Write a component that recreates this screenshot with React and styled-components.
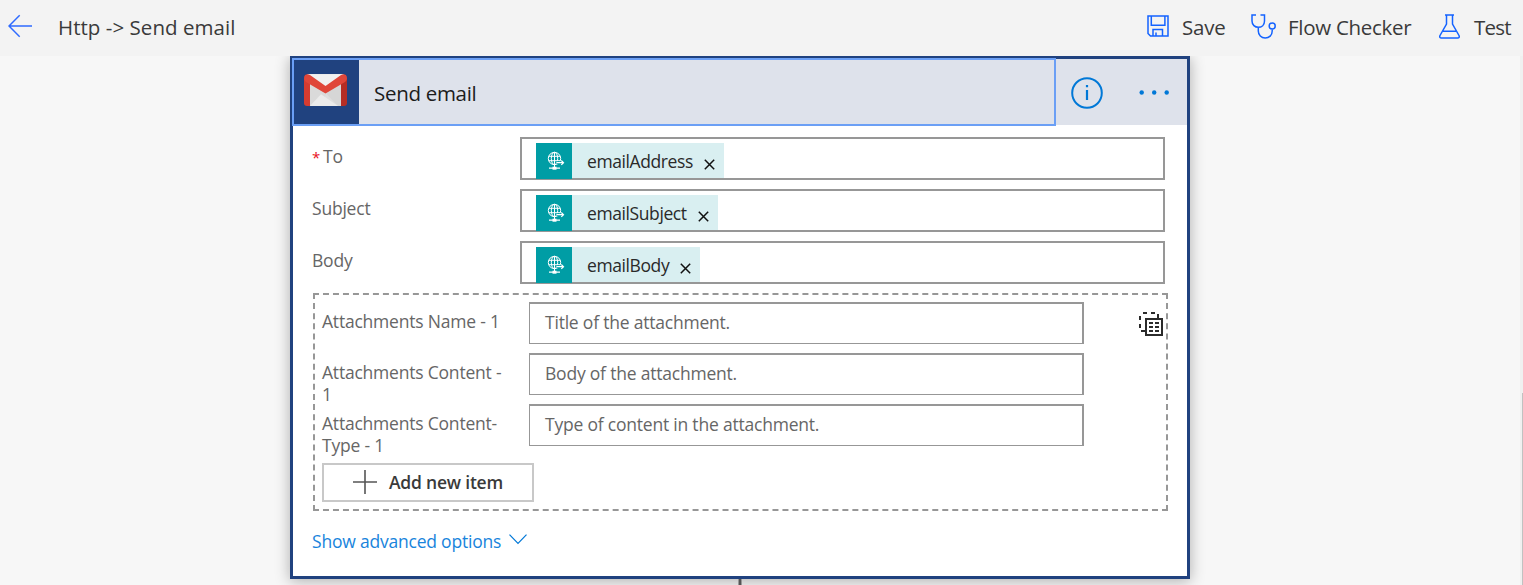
import React from "react";
import styled, { createGlobalStyle } from "styled-components";

const GlobalStyle = createGlobalStyle`
  * { box-sizing: border-box; }
  body { margin: 0; background: #f7f7f7; overflow: hidden; font-family: "Open Sans", "Noto Sans", sans-serif; }
  svg { display: block; flex: none; }
`;

const Page = styled.div`
  display: flex;
  flex-direction: column;
  height: 585px;
  overflow: hidden;
`;

const TopBar = styled.header`
  display: flex;
  align-items: center;
  height: 56px;
  flex: none;
  padding: 0 13px 2px 8px;
  background: #f3f3f3;

  svg { margin-bottom: 2px; }
`;

const Label = styled.span`
  font-size: ${(p) => p.$size || 17.5}px;
  font-weight: ${(p) => p.$weight || 400};
  letter-spacing: ${(p) => p.$track ?? -0.21}px;
  line-height: 22px;
  color: ${(p) => p.$color || "#666"};
  white-space: ${(p) => (p.$wrap ? "normal" : "nowrap")};
`;

const Required = styled.span`
  display: inline-block;
  width: 11px;
  font-size: 15px;
  line-height: 20px;
  color: #e81123;
`;

const FlowTitle = styled.div`
  display: flex;
  margin-left: 25px;
  flex: 1;
`;

const Command = styled.button`
  display: flex;
  align-items: center;
  gap: ${(p) => p.$gap}px;
  width: ${(p) => p.$width}px;
  height: 54px;
  padding: 0;
  border: 0;
  background: none;
  font-family: inherit;
`;

const Canvas = styled.main`
  position: relative;
  display: flex;
  flex: 1;
  flex-direction: column;
  padding-left: 290px;
  overflow: hidden;
`;

const Card = styled.section`
  width: 900px;
  height: 523px;
  flex: none;
  border: 3px solid #20427f;
  background: #fff;
  box-shadow: 0 2px 14px rgba(0, 0, 0, 0.3);
`;

const Connector = styled.div`
  width: 4px;
  height: 6px;
  margin-left: 448px;
  background: #555;
  border: solid #999;
  border-width: 0 1px;
  z-index: 1;
`;

const ScrollTrack = styled.div`
  position: absolute;
  top: 0;
  right: 0;
  width: 3px;
  height: 100%;
  padding: 337px 0 0 2px;
  background: #f0f0f0;
`;

const ScrollThumb = styled.div`
  height: 192px;
  background: #c1c1c1;
`;

const CardHeader = styled.div`
  display: flex;
  align-items: center;
  height: 66px;
  background: #dee2eb;
`;

const HeaderFocus = styled.div`
  display: flex;
  align-items: center;
  width: 762px;
  height: 66px;
  outline: 2px solid #6b9ff5;
  outline-offset: -1px;
`;

const HeaderTitle = styled.div`
  display: flex;
  padding-top: 2px;
`;

const BrandTile = styled.div`
  display: flex;
  width: 66px;
  height: 66px;
  margin-right: 15px;
  padding: 15px 0 0 11px;
  background: #20427f;
  box-shadow: inset 1px 0 #4680dc, inset 0 1px #4680dc, inset 0 -1px #4680dc;
`;

const HeaderActions = styled.div`
  display: flex;
  flex: 1;
  align-items: center;
  justify-content: space-between;
  padding: 1px 17px 0 16px;
`;

const Form = styled.div`
  padding: 12px 19px 0 19px;
`;

const FieldRow = styled.div`
  display: flex;
  height: 52px;
`;

const FieldLabel = styled.div`
  width: 208px;
  flex: none;
  padding-top: 8px;
  line-height: 22px;
`;

const TokenInput = styled.div`
  width: 645px;
  height: 43px;
  padding: 4px 14px 0;
  border: 2px solid #979797;
`;

const Token = styled.div`
  display: flex;
  align-items: center;
  width: ${(p) => p.$width}px;
  height: 35px;
  background: #d9eff1;
`;

const TokenIcon = styled.div`
  display: flex;
  width: 36px;
  height: 36px;
  flex: none;
  align-self: flex-start;
  margin-right: 15px;
  padding: 8px 0 0 11px;
  background: #009da5;
`;

const TokenClose = styled.span`
  display: flex;
  margin-left: auto;
  padding: 7px 9px 0 0;
`;

const Attachments = styled.div`
  width: 855px;
  height: 218px;
  margin-left: 1px;
  border: 2px dashed #979797;
  padding: 7px;
`;

const AttachmentRow = styled.div`
  display: flex;
  height: 51px;
`;

const AttachmentLabel = styled.div`
  display: flex;
  width: 207px;
  flex: none;
  padding: 8px 22px 0 0;
`;

const TextInput = styled.div`
  display: flex;
  align-items: center;
  width: 555px;
  height: 42px;
  flex: none;
  padding: 0 15px 3px;
  border: solid #979797;
  border-width: 2px 2px 1px 1px;
`;

const ArrayToggle = styled.span`
  display: flex;
  margin: 10px 0 0 55px;
`;

const AddButton = styled.button`
  display: flex;
  align-items: center;
  width: 212px;
  height: 39px;
  margin-top: 8px;
  padding: 0 0 1px 29px;
  gap: 12px;
  border: 2px solid #c8c8c8;
  background: #fff;
  font-family: inherit;

  svg { margin-bottom: 1px; }
`;

const AdvancedLink = styled.a`
  display: flex;
  align-items: center;
  gap: 8px;
  margin-top: 19px;

  svg { margin-bottom: 4px; }
`;

const BackIcon = () => (
  <svg width="25" height="24" viewBox="0 0 25 24" fill="none" stroke="#2f6bff" strokeWidth="1.5">
    <path d="M24 12H1M11.700 1.300L1 12l10.700 10.700" />
  </svg>
);

const SaveIcon = () => (
  <svg width="22" height="22" viewBox="0 0 22 22" fill="none" stroke="#1463ff" strokeWidth="1.5">
    <path d="M1 1h20v20H3.500L1 18.500zM4.300 1v9.300h13.600V1M6 21v-6.500h9.500V21M9 21v-3.500" />
  </svg>
);

const StethoscopeIcon = () => (
  <svg width="25" height="25" viewBox="0 0 25 25" fill="none" stroke="#1463ff" strokeWidth="1.5">
    <path d="M5 1H1v6c0 4 3 6.300 6.300 6.300S13.500 11 13.500 7V1h-4M7.300 13.300V17c0 4 3 7 6.900 7s7-2.700 7-7v-1.500" />
    <circle cx="21.200" cy="12" r="3" />
  </svg>
);

const FlaskIcon = () => (
  <svg width="21" height="25" viewBox="0 0 21 25" fill="none" stroke="#1463ff" strokeWidth="1.5">
    <path d="M6 1h9M7.500 1v9L1 21.500C.3 23 1 24 2.300 24h16.400c1.300 0 2-1 1.300-2.500L13.500 10V1M4 17.300h13" />
  </svg>
);

const GmailIcon = () => (
  <svg width="43" height="32" viewBox="0 0 43 33" preserveAspectRatio="none">
    <rect x="3" y="0" width="37" height="33" rx="1.500" fill="#dedede" />
    <path d="M5 .3h33L21.500 14z" fill="#f1f1f1" />
    <path d="M6 10l16 11-6 12H6z" fill="#dadada" />
    <path d="M22 20L37 9v24h-3z" fill="#d6d6d6" />
    <path d="M6 33l11-12 17 12z" fill="#ebebeb" />
    <path d="M0 4l6 5v24H3c-2 0-3-1-3-3z" fill="#d63c30" />
    <path d="M43 4l-6 5v24h3c2 0 3-1 3-3z" fill="#b42d24" />
    <path d="M0 4.500C0 .6 3-.9 6.300 1.300L21.500 12.500 36.700 1.300C40-.9 43 .6 43 4.500c0 2-1 3-2 3.800L21.500 20 2 8.300C1 7.500 0 6.500 0 4.500z" fill="#e04639" />
  </svg>
);

const InfoIcon = () => (
  <svg width="32" height="32" viewBox="0 0 32 32" fill="none" stroke="#0078d7" strokeWidth="2">
    <circle cx="16" cy="16" r="14.800" />
    <path d="M16 13v10M16 8v2.300" strokeWidth="2.200" />
  </svg>
);

const MoreIcon = () => (
  <svg width="31" height="5" viewBox="0 0 31 5" fill="#0078d7">
    <circle cx="2.700" cy="2.500" r="2.200" />
    <circle cx="15.200" cy="2.500" r="2.200" />
    <circle cx="27.700" cy="2.500" r="2.200" />
  </svg>
);

const RequestIcon = () => (
  <svg width="18" height="20" viewBox="0 0 18 20" fill="none" stroke="#fff" strokeWidth="1">
    <circle cx="7.500" cy="7.500" r="6.200" />
    <ellipse cx="7.500" cy="7.500" rx="3.200" ry="6.200" />
    <path d="M1.800 5.300h11.400M1.800 9.700h11.400M7.500 1.200v16" />
    <path d="M9.500 11.700h6" stroke="#009da5" strokeWidth="3" />
    <path d="M9.500 11.700h7M14.300 9.500l2.200 2.200-2.200 2.200M2 17.200h11" strokeWidth="1.200" />
    <path d="M5.500 17.200h4" strokeWidth="3" />
  </svg>
);

const CloseIcon = () => (
  <svg width="11" height="11" viewBox="0 0 11 11" stroke="#111" strokeWidth="1.500">
    <path d="M.8.8l9.400 9.400M10.200.8L.8 10.200" />
  </svg>
);

const ArrayIcon = () => (
  <svg width="24" height="24" viewBox="0 0 24 24" fill="none" stroke="#2b2b2b" strokeWidth="2">
    <path d="M4 1h4M12 1h4M19 2v4M1 4v4M1 12v4M2 19h4" />
    <path d="M7 7h16v16H7z" />
    <path d="M10 11h4M16 11h4M10 15h4M16 15h4M10 19h4M16 19h4" />
  </svg>
);

const PlusIcon = () => (
  <svg width="24" height="24" viewBox="0 0 24 24" stroke="#555" strokeWidth="1.600">
    <path d="M0 12h24M12 0v24" />
  </svg>
);

const ChevronIcon = () => (
  <svg width="18" height="11" viewBox="0 0 18 11" fill="none" stroke="#0078d7" strokeWidth="1.200">
    <path d="M.5.700L9 9.500 17.500.700" />
  </svg>
);

const fields = [
  { label: "To", required: true, token: "emailAddress", width: 188 },
  { label: "Subject", token: "emailSubject", width: 182 },
  { label: "Body", token: "emailBody", width: 164 },
];

const attachments = [
  { label: "Attachments Name - 1", hint: "Title of the attachment." },
  { label: "Attachments Content - 1", hint: "Body of the attachment." },
  { label: "Attachments Content-Type - 1", hint: "Type of content in the attachment." },
];

export default function App() {
  return (
    <Page>
      <GlobalStyle />
      <TopBar>
        <BackIcon />
        <FlowTitle><Label $size={20.5} $track={0.04} $color="#3a3a3a">{"Http -> Send email"}</Label></FlowTitle>
        <Command $gap={13} $width={104}><SaveIcon /><Label $size={20.5} $color="#3a3a3a">Save</Label></Command>
        <Command $gap={12} $width={188}><StethoscopeIcon /><Label $size={20.5} $track={-0.28} $color="#3a3a3a">Flow Checker</Label></Command>
        <Command $gap={14} $width={71}><FlaskIcon /><Label $size={20.5} $track={-0.8} $color="#3a3a3a">Test</Label></Command>
      </TopBar>
      <Canvas>
        <Card>
          <CardHeader>
            <HeaderFocus>
              <BrandTile><GmailIcon /></BrandTile>
              <HeaderTitle><Label $size={20.5} $track={-0.3} $color="#1c1c1c">Send email</Label></HeaderTitle>
            </HeaderFocus>
            <HeaderActions><InfoIcon /><MoreIcon /></HeaderActions>
          </CardHeader>
          <Form>
            {fields.map((f) => (
              <FieldRow key={f.label}>
                <FieldLabel>
                  {f.required && <Required>*</Required>}
                  <Label>{f.label}</Label>
                </FieldLabel>
                <TokenInput>
                  <Token $width={f.width}>
                    <TokenIcon><RequestIcon /></TokenIcon>
                    <Label $track={-0.4} $color="#2a2a2a">{f.token}</Label>
                    <TokenClose><CloseIcon /></TokenClose>
                  </Token>
                </TokenInput>
              </FieldRow>
            ))}
            <Attachments>
              {attachments.map((a, i) => (
                <AttachmentRow key={a.label}>
                  <AttachmentLabel><Label $wrap>{a.label}</Label></AttachmentLabel>
                  <TextInput><Label>{a.hint}</Label></TextInput>
                  {i === 0 && <ArrayToggle><ArrayIcon /></ArrayToggle>}
                </AttachmentRow>
              ))}
              <AddButton><PlusIcon /><Label $weight={600} $color="#3a3a3a">Add new item</Label></AddButton>
            </Attachments>
            <AdvancedLink><Label $color="#1884dc">Show advanced options</Label><ChevronIcon /></AdvancedLink>
          </Form>
        </Card>
        <Connector />
        <ScrollTrack><ScrollThumb /></ScrollTrack>
      </Canvas>
    </Page>
  );
}
